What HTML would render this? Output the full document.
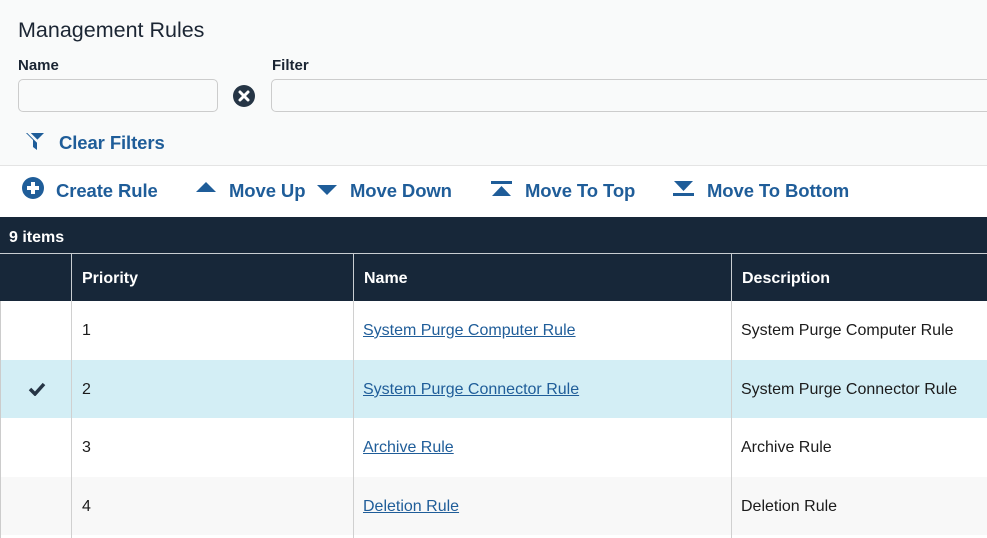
<!DOCTYPE html>
<html><head><style>
*{margin:0;padding:0;box-sizing:border-box}
body{width:987px;height:538px;overflow:hidden;background:#f9fafa;font-family:"Liberation Sans",sans-serif;color:#1b1b1b;position:relative}
.a{position:absolute;white-space:nowrap}
.blue{color:#1f5d99;font-size:18.5px;font-weight:bold;letter-spacing:-0.1px}
.lab{font-size:15px;font-weight:bold;color:#1b2533}
.cell{position:absolute;font-size:16px}
a{color:#1f5d99;text-decoration:underline}
.th{position:absolute;top:254px;height:47px;color:#fff;font-weight:bold;font-size:16px;padding:16px 0 0 10px;border-left:1px solid #c8cdd2}
.row{position:absolute;left:0;width:987px;border-left:1px solid #ccc}
.vl{position:absolute;top:301px;height:237px;width:1px;background:#d0d0d0}
</style></head><body>
<div class="a" style="left:18px;top:18px;font-size:21.5px;color:#1b2533">Management Rules</div>
<div class="a lab" style="left:18px;top:57px">Name</div>
<div class="a lab" style="left:272px;top:57px">Filter</div>
<div class="a" style="left:18px;top:79px;width:200px;height:33px;border:1px solid #ccc;border-radius:5px;background:#f9fafa"></div>
<div class="a" style="left:271px;top:79px;width:730px;height:33px;border:1px solid #ccc;border-radius:5px;background:#f9fafa"></div>
<svg class="a" style="left:232px;top:84px" width="24" height="24" viewBox="0 0 24 24"><circle cx="12" cy="12" r="11" fill="#263545"/><path d="M8 8l8 8M16 8l-8 8" stroke="#fff" stroke-width="3" stroke-linecap="round"/></svg>
<svg class="a" style="left:25px;top:130px" width="22" height="22" viewBox="0 0 22 22"><path d="M1 3h18l-7 7v10l-4-3v-7z" fill="#1f5d99"/><path d="M2 1l16 16" stroke="#f9fafa" stroke-width="2.5"/></svg>
<div class="a blue" style="left:59px;top:132px">Clear Filters</div>
<div class="a" style="left:0;top:165px;width:987px;height:52px;background:#fff;border-top:1px solid #e4e4e4"></div>
<svg class="a" style="left:22px;top:177px" width="22" height="22" viewBox="0 0 22 22"><circle cx="11" cy="11" r="11" fill="#1f5d99"/><path d="M11 5v12M5 11h12" stroke="#fff" stroke-width="4"/></svg>
<div class="a blue" style="left:56px;top:180px">Create Rule</div>
<svg class="a" style="left:196px;top:181px" width="20" height="12"><path d="M0 11L10 1l10 10z" fill="#1f5d99"/></svg>
<div class="a blue" style="left:229px;top:180px">Move Up</div>
<svg class="a" style="left:317px;top:184px" width="20" height="12"><path d="M0 1L10 11 20 1z" fill="#1f5d99"/></svg>
<div class="a blue" style="left:350px;top:180px">Move Down</div>
<svg class="a" style="left:491px;top:181px" width="21" height="15"><rect x="0" y="0" width="21" height="3" fill="#1f5d99"/><path d="M1 15L10.5 5 20 15z" fill="#1f5d99"/></svg>
<div class="a blue" style="left:525px;top:180px">Move To Top</div>
<svg class="a" style="left:673px;top:181px" width="21" height="15"><path d="M1 0L10.5 10 20 0z" fill="#1f5d99"/><rect x="0" y="12" width="21" height="3" fill="#1f5d99"/></svg>
<div class="a blue" style="left:707px;top:180px">Move To Bottom</div>
<div class="a" style="left:0;top:217px;width:987px;height:84px;background:#172739"></div>
<div class="a" style="left:9px;top:229px;color:#fff;font-weight:bold;font-size:16px">9 items</div>
<div class="a" style="left:0;top:253px;width:987px;height:1px;background:#c8cdd2"></div>
<div class="th" style="left:71px;width:282px">Priority</div>
<div class="th" style="left:353px;width:378px">Name</div>
<div class="th" style="left:731px;width:256px">Description</div>
<div class="row" style="top:301px;height:59px;background:#fff"></div>
<div class="row" style="top:360px;height:58px;background:#d3eef5"></div>
<div class="row" style="top:418px;height:59px;background:#fff"></div>
<div class="row" style="top:477px;height:58px;background:#f8f8f8"></div>
<div class="row" style="top:535px;height:3px;background:#fff"></div>
<div class="vl" style="left:71px"></div><div class="vl" style="left:353px"></div><div class="vl" style="left:731px"></div>
<svg class="a" style="left:28px;top:382px" width="18" height="14"><path d="M2 7l5 5L16 2" stroke="#263545" stroke-width="3.5" fill="none"/></svg>
<div class="cell" style="left:82px;top:322px">1</div>
<div class="cell" style="left:82px;top:381px">2</div>
<div class="cell" style="left:82px;top:439px">3</div>
<div class="cell" style="left:82px;top:498px">4</div>
<div class="cell" style="left:363px;top:322px"><a>System Purge Computer Rule</a></div>
<div class="cell" style="left:363px;top:381px"><a>System Purge Connector Rule</a></div>
<div class="cell" style="left:363px;top:439px"><a>Archive Rule</a></div>
<div class="cell" style="left:363px;top:498px"><a>Deletion Rule</a></div>
<div class="cell" style="left:741px;top:322px">System Purge Computer Rule</div>
<div class="cell" style="left:741px;top:381px">System Purge Connector Rule</div>
<div class="cell" style="left:741px;top:439px">Archive Rule</div>
<div class="cell" style="left:741px;top:498px">Deletion Rule</div>
</body></html>
